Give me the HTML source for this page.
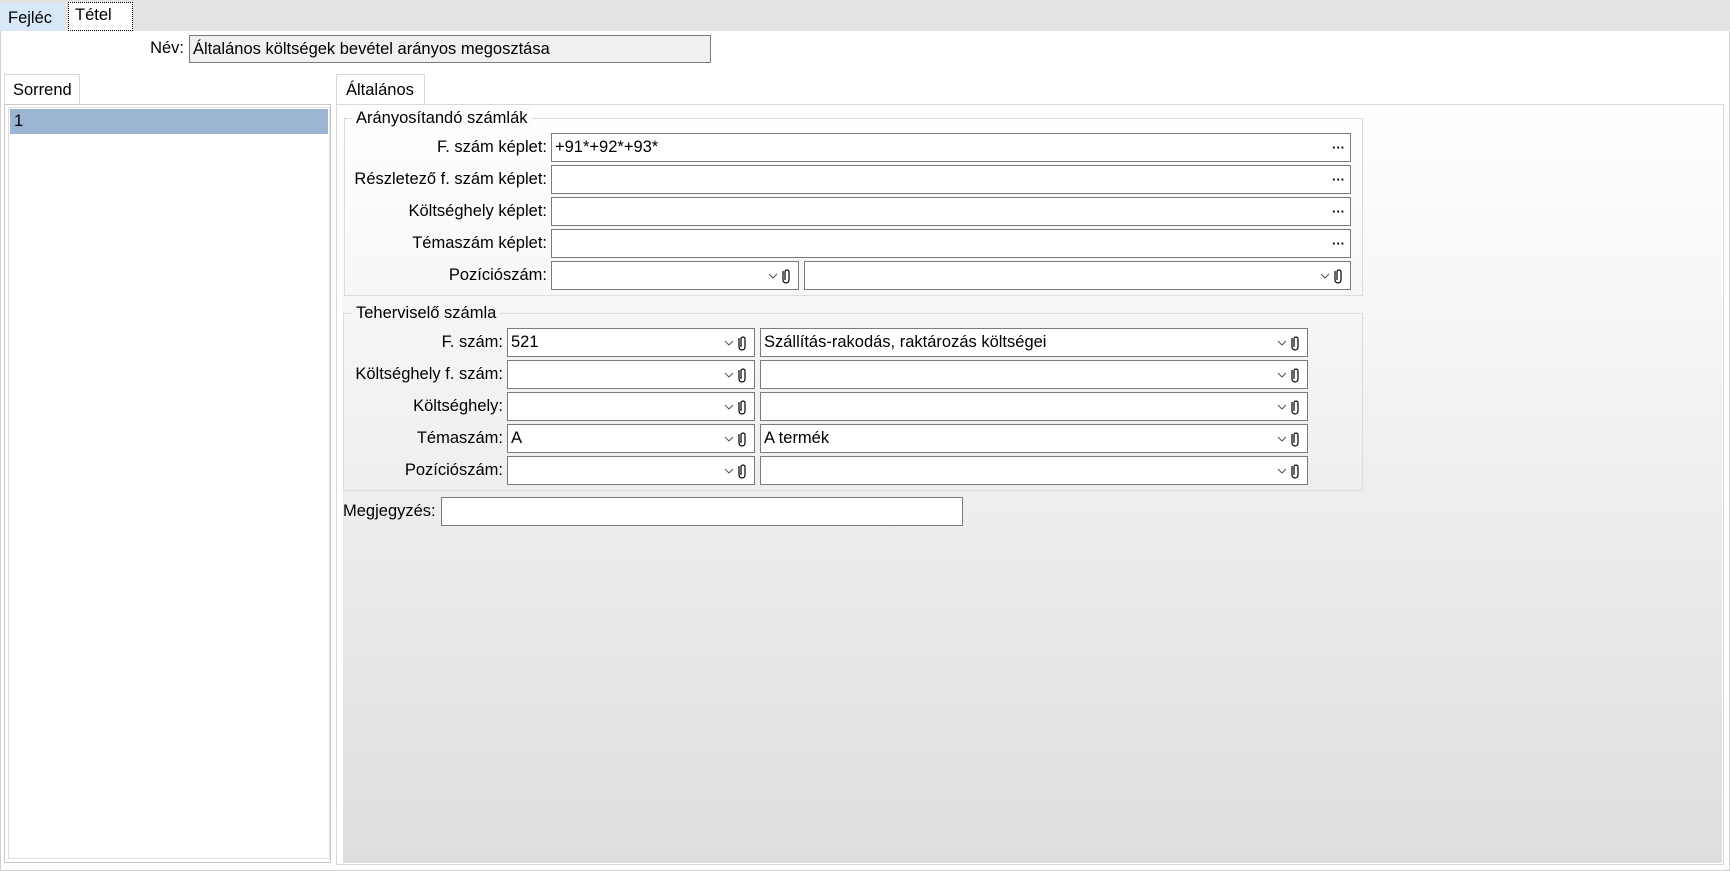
<!DOCTYPE html>
<html><head><meta charset="utf-8"><style>
*{box-sizing:border-box;margin:0;padding:0}
body{width:1730px;height:871px;position:relative;background:#fff;font-family:"Liberation Sans",sans-serif;font-size:16.5px;color:#000;overflow:hidden}
.a{position:absolute}
.lbl{position:absolute;text-align:right;white-space:nowrap;line-height:29px;height:29px}
.f{position:absolute;height:29px;border:1px solid #7a7a7a;background:#fff;line-height:27px;padding-left:3px;white-space:nowrap}
.dots{position:absolute;right:5px;top:0;font-size:13px;font-weight:bold}
.cb{position:absolute;right:4px;top:6px;width:26px;height:16px}
</style></head><body>
<div class="a" style="left:0;top:0;width:1730px;height:31px;background:#e3e3e3"></div>
<div class="a" style="left:0;top:3px;width:64px;height:28px;background:#d9e8f7;line-height:30px;padding-left:8px">Fejléc</div>
<div class="a" style="left:68px;top:2px;width:65px;height:29px;background:#fff;border:1px dotted #000;line-height:24px;padding-left:6px">Tétel</div>
<div class="a" style="left:0;top:31px;width:1730px;height:840px;border-left:1px solid #d0d0d0;border-right:1px solid #d0d0d0;border-bottom:1px solid #d0d0d0"></div>
<div class="lbl" style="right:1546px;top:34px">Név:</div>
<div class="f" style="left:189px;top:35px;width:522px;height:28px;background:#f0f0f0;line-height:26px">Általános költségek bevétel arányos megosztása</div>

<div class="a" style="left:4px;top:74px;width:76px;height:31px;border:1px solid #d9d9d9;border-bottom:none;background:#fff;line-height:30px;padding-left:8px">Sorrend</div>
<div class="a" style="left:4px;top:104px;width:327px;height:759px;border:1px solid #c8c8c8;background:#fff"></div>
<div class="a" style="left:8px;top:107px;width:322px;height:752px;border:1px solid #e0e0e0;background:#fff"></div>
<div class="a" style="left:10px;top:109px;width:318px;height:25px;background:#9bb4d1;line-height:25px;padding-left:4px">1</div>

<div class="a" style="left:336px;top:74px;width:89px;height:31px;border:1px solid #d9d9d9;border-bottom:none;background:#fff;line-height:30px;padding-left:9px">Általános</div>
<div class="a" style="left:336px;top:104px;width:1388px;height:761px;border:1px solid #d9d9d9;background:#fff"></div>
<div class="a" style="left:343px;top:105px;width:1379px;height:758px;background:linear-gradient(#fff,#dedede)"></div>

<div class="a" style="left:344px;top:118px;width:1019px;height:178px;border:1px solid #dcdcdc"></div>
<div class="a" style="left:352px;top:107px;padding:0 4px;background:#fcfcfc;line-height:22px">Arányosítandó számlák</div>
<div class="lbl" style="right:1183px;top:133px">F. szám képlet:</div>
<div class="f" style="left:551px;top:133px;width:800px">+91*+92*+93*<span class="dots">···</span></div>
<div class="lbl" style="right:1183px;top:165px">Részletező f. szám képlet:</div>
<div class="f" style="left:551px;top:165px;width:800px"><span class="dots">···</span></div>
<div class="lbl" style="right:1183px;top:197px">Költséghely képlet:</div>
<div class="f" style="left:551px;top:197px;width:800px"><span class="dots">···</span></div>
<div class="lbl" style="right:1183px;top:229px">Témaszám képlet:</div>
<div class="f" style="left:551px;top:229px;width:800px"><span class="dots">···</span></div>
<div class="lbl" style="right:1183px;top:261px">Pozíciószám:</div>
<div class="f" style="left:551px;top:261px;width:248px"><svg class="cb" viewBox="0 0 26 16"><path d="M1 6l4 4 4-4" fill="none" stroke="#555"/><path d="M17 12V4a2 2 0 0 1 4 0v8a3 3 0 0 1-6 0V3" fill="none" stroke="#000" stroke-width="1.2"/></svg></div>
<div class="f" style="left:804px;top:261px;width:547px"><svg class="cb" viewBox="0 0 26 16"><path d="M1 6l4 4 4-4" fill="none" stroke="#555"/><path d="M17 12V4a2 2 0 0 1 4 0v8a3 3 0 0 1-6 0V3" fill="none" stroke="#000" stroke-width="1.2"/></svg></div>

<div class="a" style="left:343px;top:313px;width:1020px;height:178px;border:1px solid #dcdcdc"></div>
<div class="a" style="left:352px;top:302px;padding:0 4px;background:#f6f6f6;line-height:22px">Teherviselő számla</div>

<div class="lbl" style="right:1227px;top:328px">F. szám:</div>
<div class="f" style="left:507px;top:328px;width:248px">521<svg class="cb" viewBox="0 0 26 16"><path d="M1 6l4 4 4-4" fill="none" stroke="#555"/><path d="M17 12V4a2 2 0 0 1 4 0v8a3 3 0 0 1-6 0V3" fill="none" stroke="#000" stroke-width="1.2"/></svg></div>
<div class="f" style="left:760px;top:328px;width:548px">Szállítás-rakodás, raktározás költségei<svg class="cb" viewBox="0 0 26 16"><path d="M1 6l4 4 4-4" fill="none" stroke="#555"/><path d="M17 12V4a2 2 0 0 1 4 0v8a3 3 0 0 1-6 0V3" fill="none" stroke="#000" stroke-width="1.2"/></svg></div>
<div class="lbl" style="right:1227px;top:360px">Költséghely f. szám:</div>
<div class="f" style="left:507px;top:360px;width:248px"><svg class="cb" viewBox="0 0 26 16"><path d="M1 6l4 4 4-4" fill="none" stroke="#555"/><path d="M17 12V4a2 2 0 0 1 4 0v8a3 3 0 0 1-6 0V3" fill="none" stroke="#000" stroke-width="1.2"/></svg></div>
<div class="f" style="left:760px;top:360px;width:548px"><svg class="cb" viewBox="0 0 26 16"><path d="M1 6l4 4 4-4" fill="none" stroke="#555"/><path d="M17 12V4a2 2 0 0 1 4 0v8a3 3 0 0 1-6 0V3" fill="none" stroke="#000" stroke-width="1.2"/></svg></div>
<div class="lbl" style="right:1227px;top:392px">Költséghely:</div>
<div class="f" style="left:507px;top:392px;width:248px"><svg class="cb" viewBox="0 0 26 16"><path d="M1 6l4 4 4-4" fill="none" stroke="#555"/><path d="M17 12V4a2 2 0 0 1 4 0v8a3 3 0 0 1-6 0V3" fill="none" stroke="#000" stroke-width="1.2"/></svg></div>
<div class="f" style="left:760px;top:392px;width:548px"><svg class="cb" viewBox="0 0 26 16"><path d="M1 6l4 4 4-4" fill="none" stroke="#555"/><path d="M17 12V4a2 2 0 0 1 4 0v8a3 3 0 0 1-6 0V3" fill="none" stroke="#000" stroke-width="1.2"/></svg></div>
<div class="lbl" style="right:1227px;top:424px">Témaszám:</div>
<div class="f" style="left:507px;top:424px;width:248px">A<svg class="cb" viewBox="0 0 26 16"><path d="M1 6l4 4 4-4" fill="none" stroke="#555"/><path d="M17 12V4a2 2 0 0 1 4 0v8a3 3 0 0 1-6 0V3" fill="none" stroke="#000" stroke-width="1.2"/></svg></div>
<div class="f" style="left:760px;top:424px;width:548px">A termék<svg class="cb" viewBox="0 0 26 16"><path d="M1 6l4 4 4-4" fill="none" stroke="#555"/><path d="M17 12V4a2 2 0 0 1 4 0v8a3 3 0 0 1-6 0V3" fill="none" stroke="#000" stroke-width="1.2"/></svg></div>
<div class="lbl" style="right:1227px;top:456px">Pozíciószám:</div>
<div class="f" style="left:507px;top:456px;width:248px"><svg class="cb" viewBox="0 0 26 16"><path d="M1 6l4 4 4-4" fill="none" stroke="#555"/><path d="M17 12V4a2 2 0 0 1 4 0v8a3 3 0 0 1-6 0V3" fill="none" stroke="#000" stroke-width="1.2"/></svg></div>
<div class="f" style="left:760px;top:456px;width:548px"><svg class="cb" viewBox="0 0 26 16"><path d="M1 6l4 4 4-4" fill="none" stroke="#555"/><path d="M17 12V4a2 2 0 0 1 4 0v8a3 3 0 0 1-6 0V3" fill="none" stroke="#000" stroke-width="1.2"/></svg></div>

<div class="lbl" style="left:343px;top:497px">Megjegyzés:</div>
<div class="f" style="left:441px;top:497px;width:522px"></div>
</body></html>
